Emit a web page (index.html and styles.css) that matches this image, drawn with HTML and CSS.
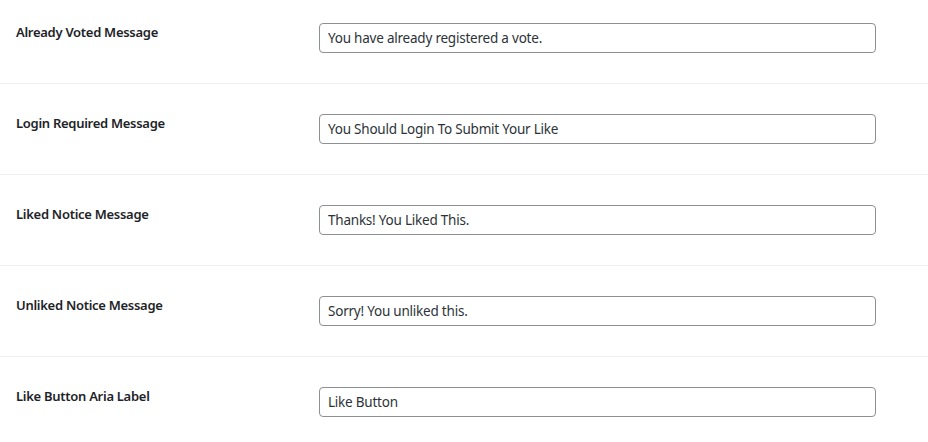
FILE: index.html
```html
<!DOCTYPE html>
<html>
<head>
<meta charset="utf-8">
<link rel="stylesheet" href="styles.css">
</head>
<body>
<div class="form-table">
  <div class="row">
    <div class="label">Already Voted Message</div>
    <div class="field"><input class="text" type="text" value="You have already registered a vote."></div>
  </div>
  <div class="row">
    <div class="label">Login Required Message</div>
    <div class="field"><input class="text" type="text" value="You Should Login To Submit Your Like"></div>
  </div>
  <div class="row">
    <div class="label">Liked Notice Message</div>
    <div class="field"><input class="text" type="text" value="Thanks! You Liked This."></div>
  </div>
  <div class="row">
    <div class="label">Unliked Notice Message</div>
    <div class="field"><input class="text" type="text" value="Sorry! You unliked this."></div>
  </div>
  <div class="row">
    <div class="label">Like Button Aria Label</div>
    <div class="field"><input class="text" type="text" value="Like Button"></div>
  </div>
</div>
</body>
</html>
```

FILE: styles.css
```css
html, body {
  margin: 0;
  padding: 0;
  background: #ffffff;
}
body {
  font-family: "Noto Sans", "Open Sans", sans-serif;
  color: #1d2327;
  overflow: hidden;
}
.form-table {
  margin-top: -7px;
}
.row {
  display: flex;
  align-items: flex-start;
  height: 90px;
  border-bottom: 1px solid #f0f0f1;
  padding-left: 16px;
}
.label {
  width: 303px;
  flex: none;
  padding-top: 30px;
  font-size: 13px;
  font-weight: 600;
  letter-spacing: -0.28px;
  line-height: 18px;
  color: #1d2327;
}
.field {
  padding-top: 30px;
}
.text {
  box-sizing: border-box;
  width: 557px;
  height: 30px;
  margin: 0;
  padding: 0 8px;
  border: 1px solid #8c8f94;
  border-radius: 4px;
  background: #fff;
  font-family: "Noto Sans", "Open Sans", sans-serif;
  font-size: 13.5px;
  letter-spacing: -0.22px;
  color: #2c3338;
  outline: none;
}
```
